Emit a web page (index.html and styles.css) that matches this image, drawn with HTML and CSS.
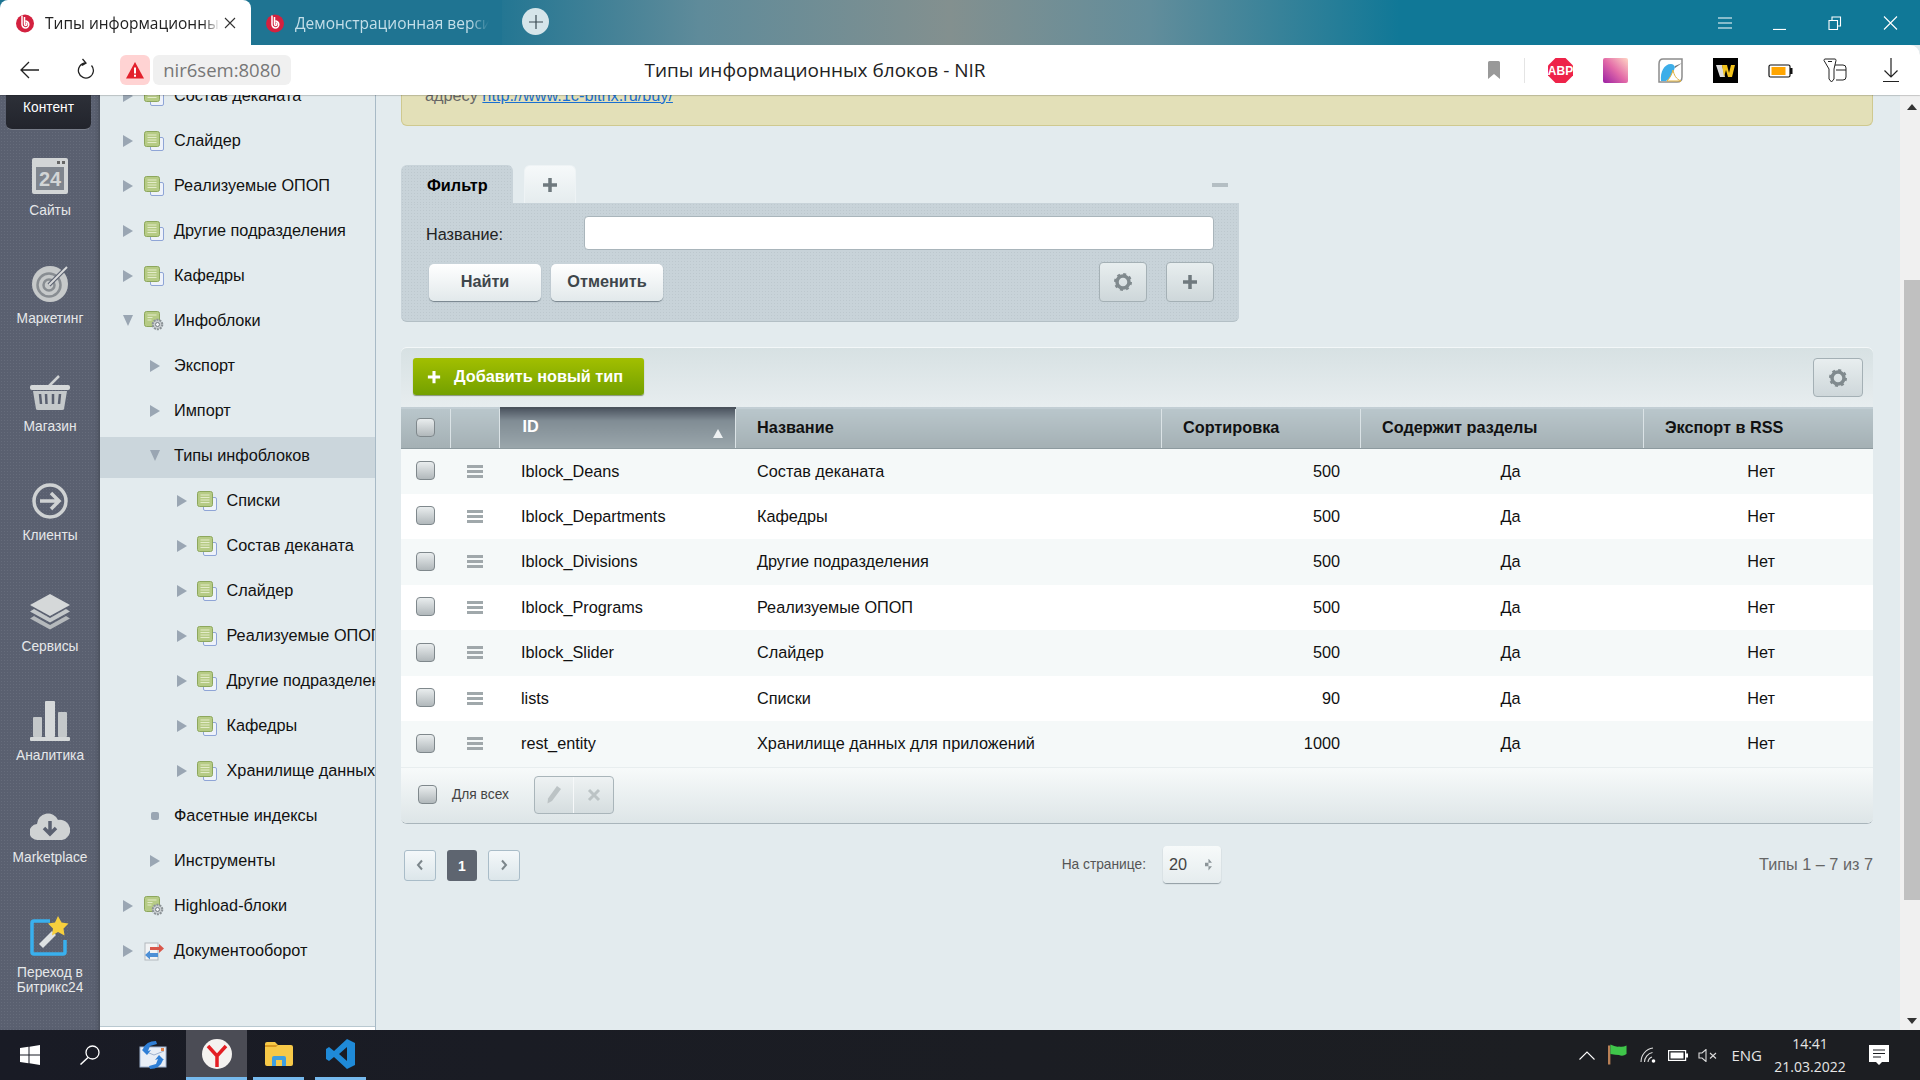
FILE: index.html
```html
<!DOCTYPE html>
<html lang="ru">
<head>
    <meta charset="UTF-8">
    <title>Типы информационных блоков - NIR</title>
    <link rel="stylesheet" href="styles.css">
</head>
<body>
    <svg class="defs" width="0" height="0">
        <symbol id="ucoz" viewBox="0 0 20 20">
            <circle cx="10" cy="10.5" r="9" fill="#d3213f"/>
            <path d="M7 2.500v9a3.400 3.400 0 1 0 3.400-3.400M9.500 4v7.300a1.200 1.200 0 1 0 1.200-1.200" fill="none" stroke="#fff" stroke-width="1.500"/>
        </symbol>
        <symbol id="doc" viewBox="0 0 20 20">
            <rect x="6.500" y="6.500" width="13" height="13" rx="1.500" fill="#eef2fa" stroke="#8fa5d6"/>
            <rect x="0.500" y="0.500" width="15" height="15" rx="2" fill="#b6cb85" stroke="#8da75c"/>
            <path d="M3.500 4h9M3.500 6.500h9M3.500 9h9M3.500 11.500h9" stroke="#e3ebc9" stroke-width="1.200"/>
        </symbol>
        <symbol id="docgear" viewBox="0 0 20 20">
            <rect x="0.500" y="0.500" width="15" height="15" rx="2" fill="#b6cb85" stroke="#8da75c"/>
            <path d="M3.500 4h9M3.500 6.500h5M3.500 9h4" stroke="#e3ebc9" stroke-width="1.200"/>
            <circle cx="13.500" cy="13.500" r="4.800" fill="#c9ced1" stroke="#8b9296" stroke-width="2" stroke-dasharray="2 1"/>
            <circle cx="13.500" cy="13.500" r="2" fill="#f1f3f4" stroke="#777f84"/>
        </symbol>
        <symbol id="docflow" viewBox="0 0 20 20">
            <rect x="1" y="2" width="13" height="17" fill="#f2f3f4" stroke="#b4b9bd"/>
            <path d="M6 6h9V3l5 4.500-5 4.500V9H6z" fill="#d9574a"/>
            <path d="M14 12H6V9.500L1 14l5 4.500V16h8z" fill="#4e90d6"/>
        </symbol>
        <symbol id="gear" viewBox="0 0 20 20">
            <circle cx="10" cy="10" r="6" fill="none" stroke="#808a8e" stroke-width="3.500"/>
            <circle cx="10" cy="10" r="8" fill="none" stroke="#808a8e" stroke-width="2" stroke-dasharray="3 3.280"/>
        </symbol>
        <symbol id="plus" viewBox="0 0 16 16">
            <path d="M8 1v14M1 8h14" stroke="currentColor" stroke-width="3.500"/>
        </symbol>
    </svg>

    <header class="tabbar">
        <div class="tab tab-active">
            <svg class="favicon"><use href="#ucoz"/></svg>
            <span class="tab-title">Типы информационных блоков</span>
            <svg class="tab-close" viewBox="0 0 12 12"><path d="M1 1l10 10M11 1L1 11" stroke="#333" stroke-width="1.100"/></svg>
        </div>
        <div class="tab tab-other">
            <svg class="favicon"><use href="#ucoz"/></svg>
            <span class="tab-title">Демонстрационная версия</span>
        </div>
        <div class="tab-new"><svg viewBox="0 0 14 14"><path d="M7 0v14M0 7h14" stroke="#3a4a52" stroke-width="1.200"/></svg></div>
        <div class="winctl">
            <svg viewBox="0 0 16 14"><path d="M1 2h14M1 7h14M1 12h14" stroke="#fff" stroke-width="1.100"/></svg>
            <svg viewBox="0 0 16 14"><path d="M1 13.500h13" stroke="#fff" stroke-width="1.200"/></svg>
            <svg viewBox="0 0 16 14"><path d="M2 4.500h8.500v9H2zM5 4.500V1h8.500v9h-3" fill="none" stroke="#fff" stroke-width="1.100"/></svg>
            <svg viewBox="0 0 16 14"><path d="M2 .5l13 13M15 .5l-13 13" stroke="#fff" stroke-width="1.100"/></svg>
        </div>
    </header>

    <div class="addrbar">
        <svg class="nav-back" viewBox="0 0 20 18"><path d="M9 1L1 9l8 8M1 9h18" fill="none" stroke="#222" stroke-width="1.300"/></svg>
        <svg class="nav-reload" viewBox="0 0 18 22"><path d="M14.500 7.500a7.500 7.500 0 1 1-6-2.500M5.500 1l3.500 4-4 2.500" fill="none" stroke="#222" stroke-width="1.300"/></svg>
        <div class="addr-warn"><svg viewBox="0 0 18 17"><path d="M9 0l9 16.500H0z" fill="#e3202c"/><path d="M9 5.500v6M9 12.800v2" stroke="#fff" stroke-width="2"/></svg></div>
        <div class="addr-url">nir6sem:8080</div>
        <div class="addr-title">Типы информационных блоков - NIR</div>
        <div class="addr-tools">
            <svg class="t-mark" viewBox="0 0 12 18"><path d="M0 1.500Q0 0 1.500 0h9Q12 0 12 1.500V18L6 13 0 18z" fill="#999"/></svg>
            <span class="t-sep"></span>
            <svg class="t-ext" viewBox="0 0 25 25"><path d="M7.500 0h10L25 7.500v10L17.500 25h-10L0 17.500v-10z" fill="#ee2349"/><text x="12.500" y="17" text-anchor="middle" class="abp">ABP</text></svg>
            <div class="t-ext t-grad"></div>
            <svg class="t-ext" viewBox="0 0 25 25"><path d="M5 1h19v18q0 5-5 5H1V6q0-5 4-5z" fill="#fff" stroke="#8c8c8c" stroke-width="1.500"/><path d="M3 23c-1-9 3-17 10-17 2 0 3 1 4 3-2 7-5 12-9 14z" fill="#3daee9"/><path d="M17 8l7-3-7 5z" fill="#777"/><path d="M9 23c3-3 5-7 6-11 1 5 3 9 8 11z" fill="#fff" stroke="#e2b23c"/></svg>
            <svg class="t-ext" viewBox="0 0 25 25"><rect width="25" height="25"/><path d="M3 7h6l3 12H7z" fill="#ddd"/><path d="M9 7h5l2 8 2-8h4l-3 12h-4l-2-7-2 7z" fill="#f2c21a"/></svg>
            <svg class="t-ext" viewBox="0 0 25 25"><rect x="1" y="7" width="21" height="12" rx="1.500" fill="#fff" stroke="#111" stroke-width="1.200"/><rect x="3.500" y="9" width="14" height="8" fill="#ffa500"/><rect x="22" y="10" width="2.500" height="6" fill="#111"/></svg>
            <svg class="t-ext" viewBox="0 0 25 25"><path d="M12 7h8q3 0 3 3v9q0 3-3 3h-7" fill="#fff" stroke="#222"/><path d="M2 1h10q1 0 1 1.500L11 11v10l-2.500 3L6 21V11L1 2.500Q1 1 2 1z" fill="#fff" stroke="#222"/><path d="M5 3.500h4M13 12h10" stroke="#222"/></svg>
            <svg class="t-down" viewBox="0 0 16 24"><path d="M8 0v19M1.500 12.500L8 19l6.500-6.500M0 23.500h16" fill="none" stroke="#222" stroke-width="1.200"/></svg>
        </div>
    </div>

    <main class="page">
        <nav class="sidemenu">
            <div class="side-active">Контент</div>
            <a class="side-item">
                <svg viewBox="0 0 36 36" class="side-ico"><rect width="36" height="36" rx="2" fill="#d2d5d6"/><rect x="4" y="9" width="28" height="23" fill="#7f858e"/><text x="18" y="28" text-anchor="middle" class="cal">24</text><path d="M25 3h3v3h-3zM30 3h3v3h-3z" fill="#666"/></svg>
                <span>Сайты</span>
            </a>
            <a class="side-item">
                <svg viewBox="0 0 36 36" class="side-ico"><circle cx="18" cy="18" r="18" fill="#c6c9ca"/><circle cx="17" cy="19" r="11.500" fill="none" stroke="#888d92" stroke-width="2.500"/><circle cx="17" cy="19" r="5.500" fill="none" stroke="#888d92" stroke-width="2.500"/><path d="M17 19L34 2" stroke="#5a6070" stroke-width="4"/><path d="M17 19L35 1" stroke="#d8dadb" stroke-width="2"/></svg>
                <span>Маркетинг</span>
            </a>
            <a class="side-item">
                <svg viewBox="0 0 40 36" class="side-ico"><path d="M17 14L29 2" stroke="#cfd2d3" stroke-width="2.500"/><rect y="11" width="40" height="5" rx="2" fill="#d5d8d9"/><path d="M3 17h34l-3 18q0 1-2 1H8q-2 0-2-1z" fill="#c4c8ca"/><path d="M10 20l1 10M16 20l.5 10M23 20v10M30 20l-1 10" stroke="#5a6070" stroke-width="2.500"/></svg>
                <span>Магазин</span>
            </a>
            <a class="side-item">
                <svg viewBox="0 0 36 36" class="side-ico"><circle cx="18" cy="18" r="16" fill="none" stroke="#cfd2d3" stroke-width="3.500"/><path d="M8 18h19M19 10l8 8-8 8" fill="none" stroke="#cfd2d3" stroke-width="3.500"/></svg>
                <span>Клиенты</span>
            </a>
            <a class="side-item">
                <svg viewBox="0 0 40 36" class="side-ico"><path d="M20 0l20 11-20 11L0 11z" fill="#d5d8d9"/><path d="M4 15l16 9 16-9 4 2.500-20 11-20-11z" fill="#c4c8ca"/><path d="M4 22l16 9 16-9 4 2.500-20 11-20-11z" fill="#b5b9bc"/></svg>
                <span>Сервисы</span>
            </a>
            <a class="side-item">
                <svg viewBox="0 0 40 40" class="side-ico"><rect x="3" y="16" width="9" height="20" rx="1" fill="#c4c8ca"/><rect x="15" y="0" width="10" height="36" rx="1" fill="#d5d8d9"/><rect x="28" y="11" width="9" height="25" rx="1" fill="#c4c8ca"/><rect y="36" width="40" height="4" rx="1" fill="#d5d8d9"/></svg>
                <span>Аналитика</span>
            </a>
            <a class="side-item">
                <svg viewBox="0 0 40 30" class="side-ico ico-cloud"><path d="M8 29a8 8 0 0 1-1-16 11 11 0 0 1 21-4 9 9 0 0 1 4 20z" fill="#cfd2d3"/><path d="M20 10v13M14 17l6 6 6-6" fill="none" stroke="#5a6070" stroke-width="3.500"/></svg>
                <span>Marketplace</span>
            </a>
            <a class="side-item">
                <svg viewBox="0 0 40 40" class="side-ico"><path d="M20 5H4q-2 0-2 2v29q0 2 2 2h29q2 0 2-2V24" fill="none" stroke="#39b0ee" stroke-width="3.500"/><path d="M9 28l13-13 4 4-13 13z" fill="#dfe2e3"/><path d="M28 0l3.500 6.500 7 1-5 5 1 7-6.500-3.500-6 3.500 1-7-5-5 7-1z" fill="#f7cf3d"/></svg>
                <span>Переход в<br>Битрикс24</span>
            </a>
        </nav>

        <aside class="tree">
            <ul class="tree-list">
                <li class="lv0"><i class="arr"></i><svg class="ti"><use href="#doc"/></svg><span>Состав деканата</span></li>
                <li class="lv0"><i class="arr"></i><svg class="ti"><use href="#doc"/></svg><span>Слайдер</span></li>
                <li class="lv0"><i class="arr"></i><svg class="ti"><use href="#doc"/></svg><span>Реализуемые ОПОП</span></li>
                <li class="lv0"><i class="arr"></i><svg class="ti"><use href="#doc"/></svg><span>Другие подразделения</span></li>
                <li class="lv0"><i class="arr"></i><svg class="ti"><use href="#doc"/></svg><span>Кафедры</span></li>
                <li class="lv0"><i class="arr arr-open"></i><svg class="ti"><use href="#docgear"/></svg><span>Инфоблоки</span></li>
                <li class="lv1"><i class="arr"></i><span>Экспорт</span></li>
                <li class="lv1"><i class="arr"></i><span>Импорт</span></li>
                <li class="lv1 selected"><i class="arr arr-open"></i><span>Типы инфоблоков</span></li>
                <li class="lv2"><i class="arr"></i><svg class="ti"><use href="#doc"/></svg><span>Списки</span></li>
                <li class="lv2"><i class="arr"></i><svg class="ti"><use href="#doc"/></svg><span>Состав деканата</span></li>
                <li class="lv2"><i class="arr"></i><svg class="ti"><use href="#doc"/></svg><span>Слайдер</span></li>
                <li class="lv2"><i class="arr"></i><svg class="ti"><use href="#doc"/></svg><span>Реализуемые ОПОП</span></li>
                <li class="lv2"><i class="arr"></i><svg class="ti"><use href="#doc"/></svg><span>Другие подразделения</span></li>
                <li class="lv2"><i class="arr"></i><svg class="ti"><use href="#doc"/></svg><span>Кафедры</span></li>
                <li class="lv2"><i class="arr"></i><svg class="ti"><use href="#doc"/></svg><span>Хранилище данных для приложений</span></li>
                <li class="lv1"><i class="dot"></i><span>Фасетные индексы</span></li>
                <li class="lv1"><i class="arr"></i><span>Инструменты</span></li>
                <li class="lv0"><i class="arr"></i><svg class="ti"><use href="#docgear"/></svg><span>Highload-блоки</span></li>
                <li class="lv0"><i class="arr"></i><svg class="ti"><use href="#docflow"/></svg><span>Документооборот</span></li>
            </ul>
        </aside>

        <section class="content">
            <div class="notice">адресу <a href="#">http://www.1c-bitrix.ru/buy/</a></div>

            <div class="filter">
                <div class="filter-tabs">
                    <div class="ftab">Фильтр</div>
                    <div class="ftab-add"><svg class="ico16"><use href="#plus"/></svg></div>
                    <div class="filter-min"></div>
                </div>
                <div class="filter-body">
                    <div class="filter-row">
                        <label for="fname">Название:</label>
                        <input type="text" id="fname">
                    </div>
                    <div class="filter-btns">
                        <button class="btn">Найти</button>
                        <button class="btn">Отменить</button>
                        <span class="spacer"></span>
                        <button class="btn-square"><svg class="ico20"><use href="#gear"/></svg></button>
                        <button class="btn-square"><svg class="ico16"><use href="#plus"/></svg></button>
                    </div>
                </div>
            </div>

            <div class="list">
                <div class="list-top">
                    <button class="btn-green"><svg class="ico14"><use href="#plus"/></svg>Добавить новый тип</button>
                    <button class="btn-square btn-cfg"><svg class="ico20"><use href="#gear"/></svg></button>
                </div>
                <table class="grid">
                    <colgroup>
                        <col class="c-check"><col class="c-menu"><col class="c-id"><col class="c-name"><col class="c-sort"><col class="c-sect"><col>
                    </colgroup>
                    <thead>
                        <tr>
                            <th class="mid"><i class="chk"></i></th>
                            <th></th>
                            <th class="sorted">ID<i class="sort-up"></i></th>
                            <th>Название</th>
                            <th>Сортировка</th>
                            <th>Содержит разделы</th>
                            <th>Экспорт в RSS</th>
                        </tr>
                    </thead>
                    <tbody>
                        <tr><td class="mid"><i class="chk"></i></td><td class="mid"><i class="burger"></i></td><td>Iblock_Deans</td><td>Состав деканата</td><td class="num">500</td><td class="yes">Да</td><td class="no">Нет</td></tr>
                        <tr><td class="mid"><i class="chk"></i></td><td class="mid"><i class="burger"></i></td><td>Iblock_Departments</td><td>Кафедры</td><td class="num">500</td><td class="yes">Да</td><td class="no">Нет</td></tr>
                        <tr><td class="mid"><i class="chk"></i></td><td class="mid"><i class="burger"></i></td><td>Iblock_Divisions</td><td>Другие подразделения</td><td class="num">500</td><td class="yes">Да</td><td class="no">Нет</td></tr>
                        <tr><td class="mid"><i class="chk"></i></td><td class="mid"><i class="burger"></i></td><td>Iblock_Programs</td><td>Реализуемые ОПОП</td><td class="num">500</td><td class="yes">Да</td><td class="no">Нет</td></tr>
                        <tr><td class="mid"><i class="chk"></i></td><td class="mid"><i class="burger"></i></td><td>Iblock_Slider</td><td>Слайдер</td><td class="num">500</td><td class="yes">Да</td><td class="no">Нет</td></tr>
                        <tr><td class="mid"><i class="chk"></i></td><td class="mid"><i class="burger"></i></td><td>lists</td><td>Списки</td><td class="num">90</td><td class="yes">Да</td><td class="no">Нет</td></tr>
                        <tr><td class="mid"><i class="chk"></i></td><td class="mid"><i class="burger"></i></td><td>rest_entity</td><td>Хранилище данных для приложений</td><td class="num">1000</td><td class="yes">Да</td><td class="no">Нет</td></tr>
                    </tbody>
                </table>
                <div class="list-foot">
                    <i class="chk"></i>
                    <span class="for-all">Для всех</span>
                    <div class="actions">
                        <span><svg viewBox="0 0 18 20" class="ico18"><path d="M12 1l4 3-9 12-4.500 2.500.5-5z" fill="#bcc3c5"/></svg></span>
                        <span><svg viewBox="0 0 14 14" class="ico14"><path d="M2 2l10 10M12 2L2 12" stroke="#bcc3c5" stroke-width="3"/></svg></span>
                    </div>
                </div>
            </div>

            <div class="pager">
                <a class="pg"><svg viewBox="0 0 8 12" class="pg-ar"><path d="M6 1.500L2 6l4 4.500" fill="none" stroke="#7c868b" stroke-width="2"/></svg></a>
                <a class="pg-cur">1</a>
                <a class="pg"><svg viewBox="0 0 8 12" class="pg-ar"><path d="M2 1.500L6 6l-4 4.500" fill="none" stroke="#7c868b" stroke-width="2"/></svg></a>
                <span class="per-label">На странице:</span>
                <div class="per-select">20<i class="updown"></i></div>
                <span class="total">Типы 1 – 7 из 7</span>
            </div>
        </section>

        <div class="scroll">
            <i class="sc-up"></i>
            <div class="sc-thumb"></div>
            <i class="sc-down"></i>
        </div>
    </main>

    <footer class="taskbar">
        <svg class="win" viewBox="0 0 20 20"><path d="M0 3l8.500-1.200v7.700H0zM9.500 1.700L20 0v9.500H9.500zM0 10.500h8.500v7.700L0 17zM9.500 10.500H20V20L9.500 18.300z" fill="#fff"/></svg>
        <svg class="search" viewBox="0 0 20 20"><circle cx="12.500" cy="7.500" r="6.500" fill="none" stroke="#fff" stroke-width="1.300"/><path d="M8 12.500L.5 19.500" stroke="#fff" stroke-width="1.500"/></svg>
        <div class="task task-first"><svg viewBox="0 0 28 30" class="task-ico"><rect x="1" y="7" width="26" height="20" fill="#e8eef6" stroke="#9fb3cf"/><path d="M5 11l10 4 10-4" fill="none" stroke="#9fb3cf"/><path d="M4 9q3-8 13-8l1 3-7 2-2 5 3-1-4 5-5-5z" fill="#2f7fd6"/><path d="M24 20q-3 9-13 9l-1-3 7-2 2-5-3 1 4-5 5 5z" fill="#2f7fd6"/><rect x="22" y="8" width="3" height="3" fill="#e0824a"/></svg></div>
        <div class="task task-on"><svg viewBox="0 0 30 30" class="task-ico"><circle cx="15" cy="15" r="15" fill="#f4f2f0"/><path d="M6 7l9 10 9-10M15 17v11" fill="none" stroke="#e31e24" stroke-width="3.500"/></svg></div>
        <div class="task task-run"><svg viewBox="0 0 28 24" class="task-ico ico-folder"><path d="M0 2q0-2 2-2h8l3 3h13q2 0 2 2v17q0 2-2 2H2q-2 0-2-2z" fill="#f7c948"/><path d="M0 5h11l2-2H0z" fill="#d99a22"/><path d="M7 24v-8q0-2 2-2h10q2 0 2 2v8h-4v-6h-6v6z" fill="#3f9fe0"/></svg></div>
        <div class="task task-run"><svg viewBox="0 0 30 30" class="task-ico"><path d="M21 0l8 4v22l-8 4-13-12-5 4-3-2v-10l3-2 5 4zM21 8l-8 7 8 7z" fill="#1f8ad8"/></svg></div>
        <span class="spacer"></span>
        <div class="tray">
            <svg class="tr-a" viewBox="0 0 16 9"><path d="M.5 8.500L8 1l7.500 7.500" fill="none" stroke="#fff" stroke-width="1.100"/></svg>
            <svg class="tr-b" viewBox="0 0 20 22"><path d="M1 1v20" stroke="#b98056" stroke-width="3"/><path d="M2.500 0q6 3 9 2 4 1 8-1v9q-4 3-8 1-3 0-9-1z" fill="#3fc64a"/></svg>
            <svg class="tr-c" viewBox="0 0 16 16"><path d="M1 15A14 14 0 0 1 13 1M4.500 15a10 10 0 0 1 8-9.500M8 15a6 6 0 0 1 4-5" fill="none" stroke="#ddd" stroke-width="1.100"/><circle cx="13.500" cy="14" r="1.800" fill="#fff"/></svg>
            <svg class="tr-d" viewBox="0 0 20 11"><rect x=".6" y=".6" width="17" height="9.800" fill="none" stroke="#fff" stroke-width="1.200"/><rect x="2.500" y="2.500" width="13" height="6" fill="#fff"/><rect x="18" y="3.500" width="2" height="4" fill="#fff"/></svg>
            <svg class="tr-e" viewBox="0 0 19 13"><path d="M1 4h3l4-3.500v12L4 9H1z" fill="none" stroke="#ddd" stroke-width="1.100"/><path d="M12 4l6 5.500M18 4l-6 5.500" stroke="#ddd" stroke-width="1.100"/></svg>
            <span class="lang">ENG</span>
            <div class="clock"><div>14:41</div><div>21.03.2022</div></div>
            <svg class="tr-f" viewBox="0 0 20 20"><path d="M0 0h20v17h-7l-3 3-3-3H0z" fill="#fff"/><path d="M4 5h12M4 8.500h12M4 12h8" stroke="#1c1e22" stroke-width="1.100"/></svg>
        </div>
    </footer>
</body>
</html>
```

FILE: styles.css
```css
* {
    box-sizing: border-box;
    margin: 0;
    padding: 0;
}

html,
body {
    width: 100%;
    height: 100%;
    overflow: hidden;
}

body {
    display: flex;
    flex-direction: column;
    font-family: "Liberation Sans", Arial, sans-serif;
    font-size: 16.250px;
    color: #000;
    background: #e3ebee;
}

.defs {
    position: absolute;
}

.spacer {
    flex: 1;
}

/* browser tabs */
.tabbar {
    height: 45px;
    flex: none;
    display: flex;
    font-family: "Open Sans", sans-serif;
    background: linear-gradient(90deg, #1d7492 480px, #5f8b9a 700px, #83908f 950px, #628d9b 1150px, #107897 1400px);
}

.tab {
    display: flex;
    align-items: center;
    width: 251px;
    padding-left: 15px;
    font-size: 15.500px;
}

.tab-active {
    background: #fff;
    border-radius: 8px 8px 0 0;
    color: #222;
}

.tab-other {
    background: #1f7492;
    border-radius: 0 0 0 8px;
    color: #c4dfe9;
    padding-left: 14px;
}

.favicon {
    width: 20px;
    height: 20px;
    flex: none;
    margin-right: 10px;
}

.tab-title {
    width: 175px;
    white-space: nowrap;
    overflow: hidden;
    -webkit-mask-image: linear-gradient(90deg, #000 90%, transparent);
    mask-image: linear-gradient(90deg, #000 90%, transparent);
}

.tab-other .tab-title {
    width: 194px;
}

.tab-close {
    width: 12px;
    height: 12px;
    margin-left: 4px;
}

.tab-new {
    width: 27px;
    height: 27px;
    margin: 8px 0 0 20px;
    border-radius: 50%;
    background: #d6e5ea;
    display: flex;
    align-items: center;
    justify-content: center;
}

.tab-new svg {
    width: 14px;
    height: 14px;
}

.winctl {
    margin-left: auto;
    display: flex;
    gap: 39px;
    padding: 16px 22px 0 0;
}

.winctl svg {
    width: 16px;
    height: 14px;
}

/* address bar */
.addrbar {
    height: 50px;
    flex: none;
    background: #fff;
    display: flex;
    align-items: center;
    position: relative;
    border-radius: 0 10px 0 0;
    z-index: 2;
    box-shadow: 0 1px 1px rgba(0, 0, 0, .18);
    font-family: "Open Sans", sans-serif;
}

.nav-back {
    width: 20px;
    height: 18px;
    margin-left: 20px;
}

.nav-reload {
    width: 18px;
    height: 22px;
    margin: -2px 0 0 37px;
}

.addr-warn {
    width: 30px;
    height: 30px;
    margin-left: 25px;
    background: #ffd3d3;
    border-radius: 6px;
    display: flex;
    align-items: center;
    justify-content: center;
}

.addr-warn svg {
    width: 18px;
    height: 17px;
}

.addr-url {
    width: 138px;
    height: 30px;
    margin-left: 3px;
    background: #f0f0f0;
    border-radius: 6px;
    color: #777;
    font-size: 18.500px;
    line-height: 30px;
    text-align: center;
}

.addr-title {
    position: absolute;
    left: 0;
    width: 1630px;
    text-align: center;
    font-size: 19px;
    color: #222;
}

.addr-tools {
    margin-left: auto;
    display: flex;
    align-items: center;
}

.t-mark {
    width: 12px;
    height: 18px;
    margin-right: 24px;
}

.t-sep {
    width: 1px;
    height: 25px;
    background: #e4e4e4;
    margin-right: 23px;
}

.t-ext {
    width: 25px;
    height: 25px;
    margin-right: 30px;
}

.t-grad {
    border-radius: 2px;
    background: linear-gradient(45deg, #9a1fa3, #e36ba8 50%, #ffd6c4);
}

.t-down {
    width: 16px;
    height: 24px;
    margin: 0 21px 0 5px;
}

.abp {
    font: bold 12px "Liberation Sans", sans-serif;
    fill: #fff;
}

.cal {
    font: bold 20px "Liberation Sans", sans-serif;
    fill: #d2d5d6;
}

/* page area */
.page {
    flex: 1;
    min-height: 0;
    display: flex;
    overflow: hidden;
}

.sidemenu {
    width: 100px;
    flex: none;
    background-color: #5a6070;
    background-image: radial-gradient(#666c7b 1px, transparent 1px);
    background-size: 3px 3px;
    box-shadow: inset -4px 0 4px -3px rgba(0, 0, 0, .25);
    color: #e6e8ea;
    font-size: 13.750px;
    text-align: center;
}

.side-active {
    width: 85px;
    height: 35px;
    margin-left: 6px;
    background: linear-gradient(#2d3038, #22242c);
    border-radius: 0 0 6px 6px;
    border-bottom: 1px solid #777c88;
    color: #fff;
    font-size: 13.750px;
    line-height: 25px;
}

.side-item {
    display: flex;
    flex-direction: column;
    align-items: center;
    height: 108px;
    padding-top: 28px;
    line-height: 15px;
}

.side-item:nth-child(4) {
    height: 109px;
}

.side-item:nth-child(5) {
    height: 111px;
}

.side-item:nth-child(8) {
    height: 101px;
}

.side-ico {
    width: 40px;
    height: 36px;
    flex: none;
    margin-bottom: 9px;
}

.side-item:nth-child(7) .side-ico {
    height: 40px;
    margin: -1px 0 7px;
}

.side-item .ico-cloud {
    height: 32px;
    margin: 0 0 8px;
}

.side-item:last-child .side-ico {
    height: 40px;
    margin: 5px 0 9px;
}

.tree {
    width: 276px;
    flex: none;
    overflow: hidden;
    border-right: 1px solid #a8bac6;
    background: #e3ebee;
    position: relative;
}

.tree::after {
    content: "";
    position: absolute;
    left: 0;
    right: 0;
    bottom: 0;
    height: 3px;
    background: #fff;
    border-top: 1px solid #b9c8d0;
}

.tree-list {
    list-style: none;
    margin-top: -22px;
    font-size: 16.250px;
    color: #111;
}

.tree-list li {
    height: 45px;
    display: flex;
    align-items: center;
    white-space: nowrap;
}

.lv0 {
    padding-left: 23px;
}

.lv1 {
    padding-left: 50px;
}

.lv2 {
    padding-left: 77px;
}

.tree-list .selected {
    background: linear-gradient(transparent 4px, #cbd6dc 4px);
}

.arr {
    width: 0;
    height: 0;
    flex: none;
    border-left: 10px solid #9aa6b3;
    border-top: 6px solid transparent;
    border-bottom: 6px solid transparent;
}

.arr-open {
    border-left: 5px solid transparent;
    border-right: 5px solid transparent;
    border-top: 11px solid #9aa6b3;
    border-bottom: 0;
}

.lv1 .arr {
    margin-right: 14px;
}

.dot {
    width: 8px;
    height: 8px;
    flex: none;
    margin-left: 1px;
    margin-right: 15px;
    border-radius: 2px;
    background: #9aa6b3;
}

.ti {
    width: 20px;
    height: 20px;
    flex: none;
    margin: 0 10px 0 11px;
}

.lv2 .ti {
    margin: 0 9.500px 0 10px;
}

/* main column */
.content {
    flex: 1;
    min-width: 0;
    padding: 0 25px;
    overflow: hidden;
}

.notice {
    width: 1472px;
    height: 32px;
    margin-top: -1px;
    padding: 0 0 0 23px;
    background: #e3e0b8;
    border: 1px solid #cfc98f;
    border-top: 0;
    border-radius: 0 0 6px 6px;
    font-size: 16.250px;
    line-height: 2px;
    color: #666;
    overflow: hidden;
}

.notice a {
    color: #1a6fd0;
}

.filter {
    width: 838px;
    margin-top: 39px;
}

.filter-tabs {
    display: flex;
    height: 38px;
    position: relative;
}

.ftab {
    width: 112px;
    padding: 11px 0 0 26px;
    font-size: 16.250px;
    font-weight: bold;
    background-color: #c8d3d9;
    background-image: radial-gradient(#bdc8ce 1px, transparent 1px);
    background-size: 3px 3px;
    border-radius: 6px 6px 0 0;
}

.ftab-add {
    width: 52px;
    margin-left: 11px;
    background: linear-gradient(#f6f9fa, #e5ecee);
    border: 1px solid #eef3f5;
    border-bottom: 0;
    border-radius: 6px 6px 0 0;
    color: #6f797e;
    display: flex;
    align-items: center;
    justify-content: center;
}

.filter-min {
    position: absolute;
    left: 811px;
    top: 18px;
    width: 16px;
    height: 4px;
    background: #b4bec3;
}

.filter-body {
    height: 119px;
    background-color: #c8d3d9;
    background-image: radial-gradient(#bdc8ce 1px, transparent 1px);
    background-size: 3px 3px;
    border-bottom: 1px solid #b3bfc5;
    border-radius: 0 0 6px 6px;
    padding: 13px 25px 0;
}

.filter-row {
    display: flex;
    align-items: center;
}

.filter-row label {
    width: 158px;
    margin-top: 3px;
    font-size: 16.250px;
    color: #222;
}

.filter-row input {
    width: 630px;
    height: 34px;
    background: #fff;
    border: 1px solid #a9b5bb;
    border-radius: 4px;
}

.filter-btns {
    display: flex;
    align-items: center;
    gap: 10px;
    margin-top: 12px;
    padding-left: 3px;
}

.btn {
    width: 112px;
    height: 37px;
    padding-bottom: 2px;
    border: 0;
    border-radius: 5px;
    background: linear-gradient(#ffffff, #e2e9eb);
    box-shadow: 0 1px 1px rgba(60, 75, 85, .6);
    font: bold 16.250px "Liberation Sans", sans-serif;
    color: #3e464b;
}

.btn-square {
    width: 48px;
    height: 40px;
    margin-left: 9px;
    border: 1px solid #a4b0b5;
    border-radius: 4px;
    background: linear-gradient(#e8eeef, #ced7da);
    color: #6f797e;
    display: flex;
    align-items: center;
    justify-content: center;
}

.ico14 {
    width: 14px;
    height: 14px;
}

.ico16 {
    width: 16px;
    height: 16px;
}

.ico18 {
    width: 18px;
    height: 20px;
}

.ico20 {
    width: 20px;
    height: 20px;
}

/* list table */
.list {
    width: 1472px;
    margin-top: 25px;
    height: 477px;
    border-radius: 6px;
    border-top: 1px solid #f3f7f8;
    border-bottom: 1px solid #a9b5bb;
    overflow: hidden;
    background: #fff;
}

.list-top {
    height: 59px;
    padding: 10px 10px 0 12px;
    display: flex;
    justify-content: space-between;
    background: linear-gradient(#d7e1e3, #e7edef);
}

.btn-green {
    width: 231px;
    height: 37px;
    border: 0;
    border-radius: 3px;
    background: linear-gradient(#a2bf00, #73a000);
    box-shadow: 0 1px 1px rgba(40, 60, 0, .5);
    font: bold 16.250px "Liberation Sans", sans-serif;
    color: #fff;
    display: flex;
    align-items: center;
    padding-left: 14px;
    gap: 13px;
}

.btn-cfg {
    width: 50px;
    height: 39px;
    margin: 0;
}

.grid {
    width: 100%;
    border-collapse: collapse;
    table-layout: fixed;
}

.c-check,
.c-menu {
    width: 49px;
}

.c-id {
    width: 236px;
}

.c-name {
    width: 426px;
}

.c-sort {
    width: 199px;
}

.c-sect {
    width: 283px;
}

.grid th {
    height: 40px;
    padding: 0 0 2px 21.500px;
    text-align: left;
    font-size: 16.250px;
    background: linear-gradient(#b9c6cb, #a4b0b4);
    border-top: 2px solid #c2ced4;
    border-bottom: 1px solid #8d9a9f;
    border-left: 1px solid #dbe3e6;
    color: #111;
}

.grid th:first-child {
    border-left: 0;
}

.grid th.sorted {
    position: relative;
    color: #fff;
    background: linear-gradient(#4f5863, #808c94 30%, #9aa6ab);
    border-top-color: #4a525c;
    padding-left: 23px;
    padding-bottom: 4px;
}

.grid .mid {
    padding: 0 0 2px;
    text-align: center;
}

.grid td {
    height: 45.500px;
    padding-left: 22px;
    font-size: 16.250px;
    color: #111;
}

.grid tbody tr:nth-child(odd) {
    background: #f5f9f9;
}

.grid .num {
    padding: 0 20px 0 0;
    text-align: right;
}

.grid .yes {
    padding: 0 0 0 18px;
    text-align: center;
}

.grid .no {
    padding: 0 0 0 6px;
    text-align: center;
}

.sort-up {
    position: absolute;
    right: 12px;
    top: 20px;
    width: 0;
    height: 0;
    border-left: 5px solid transparent;
    border-right: 5px solid transparent;
    border-bottom: 9px solid #eef1f2;
}

.chk {
    display: inline-block;
    width: 19px;
    height: 19px;
    vertical-align: middle;
    border: 1px solid #7f888c;
    border-radius: 4px;
    background: linear-gradient(#e9edee, #b1b8bb);
}

.burger {
    display: inline-block;
    width: 16px;
    height: 13px;
    vertical-align: middle;
    background: linear-gradient(#a0a8ab 3px, transparent 3px, transparent 5px, #a0a8ab 5px, #a0a8ab 8px, transparent 8px, transparent 10px, #a0a8ab 10px);
}

.list-foot {
    height: 57px;
    padding: 0 0 2px 17px;
    display: flex;
    align-items: center;
    background: linear-gradient(#f7fafa, #dde5e7);
    border-top: 1px solid #e8eeef;
}

.for-all {
    margin-left: 15px;
    font-size: 13.750px;
    color: #444;
}

.actions {
    display: flex;
    margin-left: 25px;
    height: 38px;
    width: 80px;
    border: 1px solid #a9b5ba;
    border-radius: 4px;
    background: linear-gradient(#eef2f3, #d5dddf);
}

.actions span {
    flex: 1;
    display: flex;
    align-items: center;
    justify-content: center;
}

.actions span:first-child {
    border-right: 1px solid #f6f8f9;
}

/* paging */
.pager {
    display: flex;
    align-items: center;
    width: 1472px;
    height: 38px;
    margin-top: 22px;
    padding-left: 3px;
}

.pg,
.pg-cur {
    height: 31px;
    border-radius: 3px;
    display: flex;
    align-items: center;
    justify-content: center;
}

.pg {
    width: 32px;
    border: 1px solid #a9bcc8;
    background: linear-gradient(#f4f8fa, #dce6ea);
}

.pg-ar {
    width: 8px;
    height: 12px;
}

.pg-cur {
    width: 30px;
    margin: 0 11px;
    padding-top: 2px;
    background: #5e6570;
    color: #fff;
    font-weight: bold;
    font-size: 14px;
}

.per-label {
    margin: -2px 0 0 auto;
    font-size: 13.750px;
    color: #555;
}

.per-select {
    width: 58px;
    height: 37px;
    margin: -2px 0 0 17px;
    padding-left: 6px;
    border-radius: 4px;
    background: linear-gradient(#f7fafa, #e5ecee);
    box-shadow: 0 1px 1px rgba(60, 75, 85, .5);
    line-height: 37px;
    font-size: 16.250px;
    color: #444;
    position: relative;
}

.updown {
    position: absolute;
    right: 9px;
    top: 13px;
    width: 7px;
    height: 12px;
    background: #8b9498;
    clip-path: polygon(50% 0, 100% 35%, 0 35%, 0 65%, 100% 65%, 50% 100%);
}

.total {
    margin: -2px 0 0 538px;
    font-size: 16.250px;
    color: #666;
    white-space: nowrap;
}

/* window scrollbar */
.scroll {
    width: 20px;
    flex: none;
    position: relative;
    background: #f0f0f0;
    margin-left: -2px;
    border-left: 4px solid #f0f0f0;
}

.sc-thumb {
    position: absolute;
    left: 0;
    right: 0;
    top: 185px;
    height: 620px;
    background: #c0c0c0;
}

.sc-up,
.sc-down {
    position: absolute;
    left: 3px;
    width: 0;
    height: 0;
    border-left: 5px solid transparent;
    border-right: 5px solid transparent;
}

.sc-up {
    top: 9px;
    border-bottom: 6px solid #333;
}

.sc-down {
    bottom: 6px;
    border-top: 6px solid #333;
}

/* windows taskbar */
.taskbar {
    height: 50px;
    flex: none;
    display: flex;
    align-items: center;
    background: linear-gradient(90deg, #191b25, #1c1e22 80%);
    color: #fff;
    position: relative;
    z-index: 2;
}

.win {
    width: 20px;
    height: 20px;
    margin-left: 20px;
}

.search {
    width: 20px;
    height: 20px;
    margin: 0 25px 0 40px;
}

.task {
    width: 61px;
    height: 50px;
    display: flex;
    align-items: center;
    justify-content: center;
}

.task-first {
    padding-right: 6px;
}

.task-on {
    background: #4b4c55;
    border-bottom: 3px solid #76b9ed;
    margin-right: 6px;
}

.task-run {
    width: 51px;
    border-bottom: 3px solid #76b9ed;
    margin-right: 11px;
}

.task-ico {
    width: 30px;
    height: 30px;
}

.ico-folder {
    height: 26px;
    width: 28px;
}

.tray {
    display: flex;
    align-items: center;
    padding-right: 31px;
    font-family: "Open Sans", sans-serif;
}

.tr-a {
    width: 16px;
    height: 9px;
    margin-right: 13px;
}

.tr-b {
    width: 19px;
    height: 22px;
    margin-right: 13px;
}

.tr-c {
    width: 16px;
    height: 16px;
    margin-right: 12px;
}

.tr-d {
    width: 20px;
    height: 11px;
    margin-right: 10px;
}

.tr-e {
    width: 19px;
    height: 13px;
    margin-right: 14px;
}

.lang {
    font-size: 15px;
    color: #e6e6e6;
    margin-right: 12px;
}

.clock {
    width: 72px;
    text-align: center;
    font-size: 14px;
    line-height: 23px;
    color: #e6e6e6;
    margin-right: 23px;
}

.tr-f {
    width: 20px;
    height: 20px;
}
```
